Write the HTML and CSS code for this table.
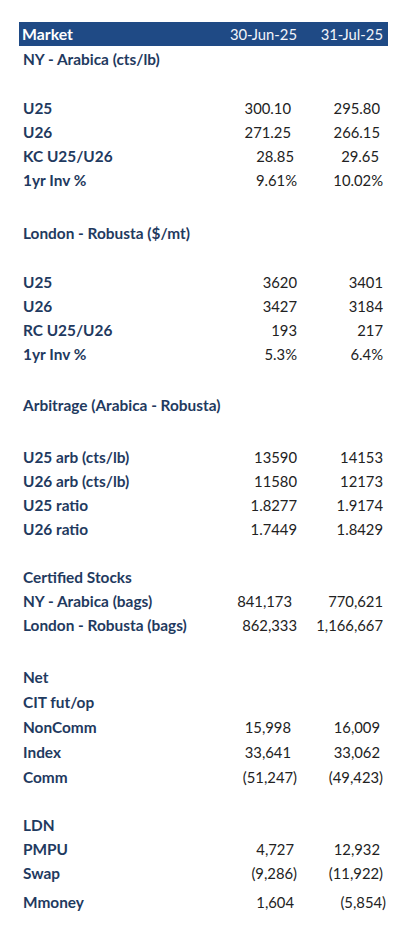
FILE: index.html
```html
<!DOCTYPE html>
<html>
<head>
<meta charset="utf-8">
<link rel="stylesheet" href="styles.css">
</head>
<body>
<div class="sheet">
  <div class="row head"><span class="lbl">Market</span><span class="v">30-Jun-25</span><span class="v">31-Jul-25</span></div>
  <div class="row h26"><span class="lbl">NY - Arabica (cts/lb)</span></div>
  <div class="blank b23"></div>
  <div class="row fix"><span class="lbl">U25</span><span class="v">300.10</span><span class="v">295.80</span></div>
  <div class="row fix"><span class="lbl">U26</span><span class="v">271.25</span><span class="v">266.15</span></div>
  <div class="row sprd"><span class="lbl">KC U25/U26</span><span class="v">28.85</span><span class="v">29.65</span></div>
  <div class="row"><span class="lbl">1yr Inv %</span><span class="v">9.61%</span><span class="v">10.02%</span></div>
  <div class="blank b29"></div>
  <div class="row"><span class="lbl">London - Robusta ($/mt)</span></div>
  <div class="blank b25"></div>
  <div class="row"><span class="lbl">U25</span><span class="v">3620</span><span class="v">3401</span></div>
  <div class="row"><span class="lbl">U26</span><span class="v">3427</span><span class="v">3184</span></div>
  <div class="row"><span class="lbl">RC U25/U26</span><span class="v">193</span><span class="v">217</span></div>
  <div class="row"><span class="lbl">1yr Inv %</span><span class="v">5.3%</span><span class="v">6.4%</span></div>
  <div class="blank b27"></div>
  <div class="row"><span class="lbl">Arbitrage (Arabica - Robusta)</span></div>
  <div class="blank b28"></div>
  <div class="row"><span class="lbl">U25 arb (cts/lb)</span><span class="v">13590</span><span class="v">14153</span></div>
  <div class="row"><span class="lbl">U26 arb (cts/lb)</span><span class="v">11580</span><span class="v">12173</span></div>
  <div class="row"><span class="lbl">U25 ratio</span><span class="v">1.8277</span><span class="v">1.9174</span></div>
  <div class="row"><span class="lbl">U26 ratio</span><span class="v">1.7449</span><span class="v">1.8429</span></div>
  <div class="blank b24"></div>
  <div class="row"><span class="lbl">Certified Stocks</span></div>
  <div class="row stock"><span class="lbl">NY - Arabica (bags)</span><span class="v">841,173</span><span class="v">770,621</span></div>
  <div class="row"><span class="lbl">London - Robusta (bags)</span><span class="v">862,333</span><span class="v">1,166,667</span></div>
  <div class="blank b28"></div>
  <div class="row h25"><span class="lbl">Net</span></div>
  <div class="row h25"><span class="lbl">CIT fut/op</span></div>
  <div class="row h25 acct"><span class="lbl">NonComm</span><span class="v">15,998</span><span class="v">16,009</span></div>
  <div class="row h25 acct"><span class="lbl">Index</span><span class="v">33,641</span><span class="v">33,062</span></div>
  <div class="row h25"><span class="lbl">Comm</span><span class="v">(51,247)</span><span class="v">(49,423)</span></div>
  <div class="blank b22"></div>
  <div class="row"><span class="lbl">LDN</span></div>
  <div class="row mix"><span class="lbl">PMPU</span><span class="v">4,727</span><span class="v">12,932</span></div>
  <div class="row h25"><span class="lbl">Swap</span><span class="v">(9,286)</span><span class="v">(11,922)</span></div>
  <div class="row h32 last"><span class="lbl">Mmoney</span><span class="v">1,604</span><span class="v">(5,854)</span></div>
</div>
</body>
</html>
```

FILE: styles.css
```css
* { box-sizing: border-box; }
html, body { margin: 0; padding: 0; background: #ffffff; }
body {
  font-family: Lato, "Open Sans", sans-serif;
  font-size: 14.8px;
  color: #222222;
}
.sheet {
  margin: 22px 0 0 19px;
  width: 369px;
}
.row {
  display: grid;
  grid-template-columns: 1fr 80px 86px;
  align-items: center;
  height: 24px;
  line-height: 24px;
  padding-right: 5px;
  white-space: nowrap;
}
.h25 { height: 25px; line-height: 25px; }
.h26 { height: 26px; line-height: 26px; }
.h32 { height: 32px; line-height: 32px; }
.lbl {
  padding-left: 4px;
  font-size: 15.4px;
  font-weight: 700;
  color: #1f3a60;
}
.v { text-align: right; }
.head {
  background: #1f4a85;
  color: #ffffff;
}
.head .lbl { color: #ffffff; padding-left: 3px; font-size: 15.8px; }
.head .v { color: #f2f5fa; }
.fix .v:nth-child(2) { padding-right: 6px; }
.fix .v:nth-child(3) { padding-right: 3px; }
.sprd .v:nth-child(2) { padding-right: 3px; }
.sprd .v:nth-child(3) { padding-right: 4px; }
.acct .v:nth-child(2) { padding-right: 6px; }
.acct .v:nth-child(3) { padding-right: 3px; }
.stock .v:nth-child(2) { padding-right: 5px; }
.mix .v:nth-child(2) { padding-right: 3px; }
.mix .v:nth-child(3) { padding-right: 3px; }
.last .v:nth-child(2) { padding-right: 3px; }
.last .v:nth-child(3) { margin-right: -3px; }
.blank { height: 24px; }
.b22 { height: 22.5px; }
.b23 { height: 23.5px; }
.b24 { height: 24px; }
.b25 { height: 25.5px; }
.b27 { height: 27px; }
.b28 { height: 28px; }
.b29 { height: 29px; }
```
